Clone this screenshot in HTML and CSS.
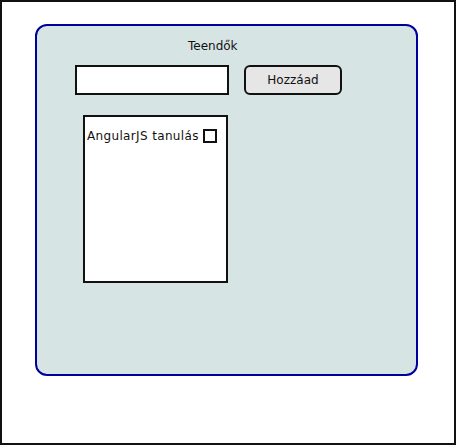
FILE: index.html
```html
<!DOCTYPE html>
<html lang="hu">
<head>
<meta charset="utf-8">
<title>Teendők</title>
<link rel="stylesheet" href="styles.css">
</head>
<body>
<div class="frame">
  <div class="panel">
    <div class="title">Teendők</div>
    <div class="add-row">
      <input class="todo-input" type="text">
      <button class="add-btn" type="button">Hozzáad</button>
    </div>
    <div class="todo-list">
      <div class="todo-item">
        <span class="todo-text">AngularJS tanulás</span>
        <input class="todo-check" type="checkbox">
      </div>
    </div>
  </div>
</div>
</body>
</html>
```
FILE: styles.css
```css
html, body {
  margin: 0;
  padding: 0;
  background: #ffffff;
}

body {
  font-family: "DejaVu Sans", "Liberation Sans", sans-serif;
  font-size: 12px;
  color: #111111;
}

.frame {
  box-sizing: border-box;
  width: 456px;
  height: 445px;
  border: 2px solid #111111;
  padding: 22px 0 0 33px;
}

.panel {
  box-sizing: border-box;
  width: 383px;
  height: 352px;
  border: 2px solid #00009c;
  border-radius: 12px;
  background: #d7e4e4;
  display: flex;
  flex-direction: column;
}

.title {
  margin: 13px 0 0 151px;
  line-height: 14px;
}

.add-row {
  display: flex;
  align-items: flex-start;
  gap: 15px;
  margin: 12px 0 0 38px;
}

.todo-input {
  box-sizing: border-box;
  width: 154px;
  height: 30px;
  margin: 0;
  padding: 0 4px;
  border: 2px solid #111111;
  border-radius: 0;
  background: #ffffff;
  font: inherit;
  outline: none;
}

.add-btn {
  box-sizing: border-box;
  width: 98px;
  height: 30px;
  margin: 0;
  padding: 0;
  border: 2px solid #111111;
  border-radius: 6px;
  background: #e6e6e6;
  font: inherit;
  color: #111111;
}

.todo-list {
  box-sizing: border-box;
  width: 145px;
  height: 168px;
  margin: 20px 0 0 46px;
  border: 2px solid #111111;
  background: #ffffff;
  padding: 12px 0 0 2px;
}

.todo-item {
  display: flex;
  align-items: center;
  gap: 4px;
  line-height: 14px;
}

.todo-text {
  letter-spacing: 0.35px;
}

.todo-check {
  appearance: none;
  -webkit-appearance: none;
  box-sizing: border-box;
  width: 14px;
  height: 14px;
  margin: 0;
  border: 2px solid #111111;
  background: #ffffff;
  border-radius: 0;
}
```
